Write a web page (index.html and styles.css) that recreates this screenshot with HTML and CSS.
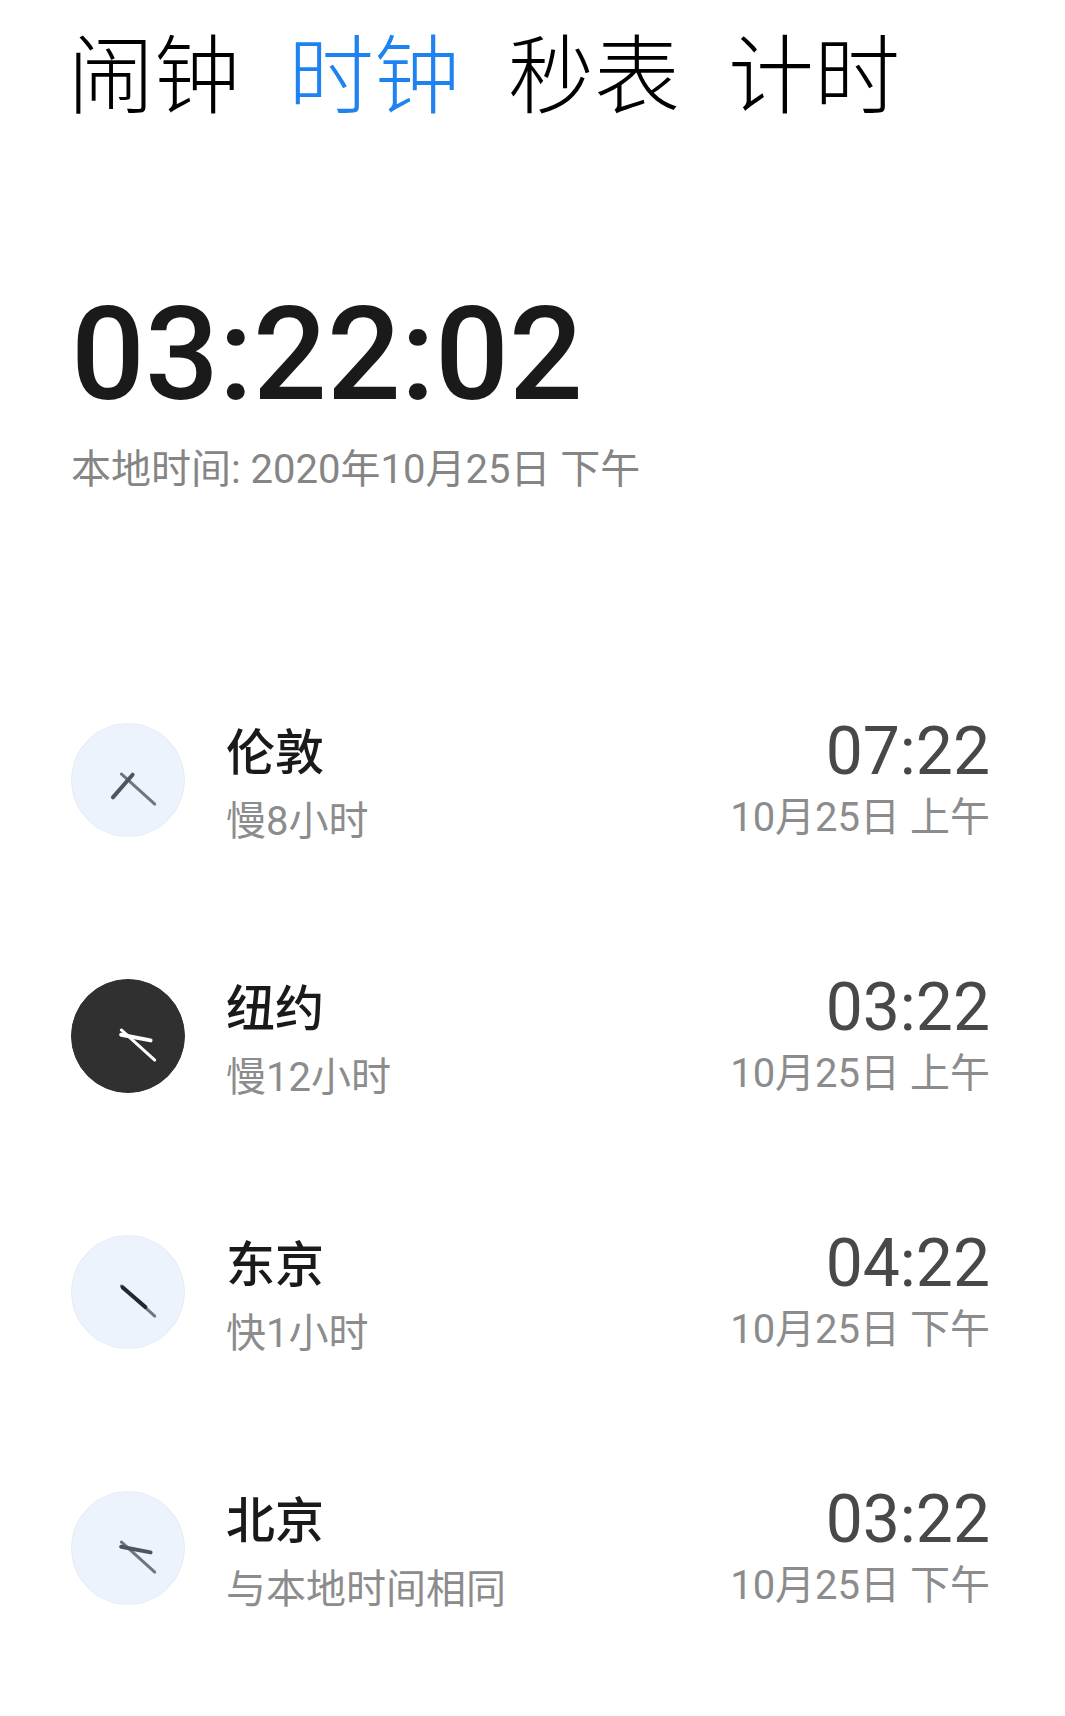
FILE: index.html
```html
<!DOCTYPE html>
<html lang="zh-CN">
<head>
<meta charset="utf-8">
<meta name="viewport" content="width=device-width, initial-scale=1">
<title>时钟</title>
<link rel="stylesheet" href="styles.css">
</head>
<body>
<nav class="tabs">
  <button class="tab" type="button">闹钟</button>
  <button class="tab tab-active" type="button" aria-current="page">时钟</button>
  <button class="tab" type="button">秒表</button>
  <button class="tab" type="button">计时</button>
</nav>
<main>
  <section class="local">
    <time class="local-time">03:22:02</time>
    <p class="local-date">本地时间: 2020年10月25日 下午</p>
  </section>
  <ul class="cities">
    <li class="city">
      <svg class="dial" viewBox="-57 -57 114 114" aria-hidden="true">
        <circle class="face" r="56.5"/>
        <path class="minute" d="M0 9V-36" transform="rotate(132)"/>
        <path class="hour" d="M0 7V-23" transform="rotate(221)"/>
      </svg>
      <div class="place">
        <h2 class="name">伦敦</h2>
        <p class="note">慢8小时</p>
      </div>
      <div class="when">
        <time class="clock">07:22</time>
        <p class="note">10月25日 上午</p>
      </div>
    </li>
    <li class="city">
      <svg class="dial dial-night" viewBox="-57 -57 114 114" aria-hidden="true">
        <circle class="face" r="56.5"/>
        <path class="minute" d="M0 9V-36" transform="rotate(132)"/>
        <path class="hour" d="M0 7V-23" transform="rotate(101)"/>
      </svg>
      <div class="place">
        <h2 class="name">纽约</h2>
        <p class="note">慢12小时</p>
      </div>
      <div class="when">
        <time class="clock">03:22</time>
        <p class="note">10月25日 上午</p>
      </div>
    </li>
    <li class="city">
      <svg class="dial" viewBox="-57 -57 114 114" aria-hidden="true">
        <circle class="face" r="56.5"/>
        <path class="minute" d="M0 9V-36" transform="rotate(132)"/>
        <path class="hour hour-solid" d="M0 7V-23" transform="rotate(131)"/>
      </svg>
      <div class="place">
        <h2 class="name">东京</h2>
        <p class="note">快1小时</p>
      </div>
      <div class="when">
        <time class="clock">04:22</time>
        <p class="note">10月25日 下午</p>
      </div>
    </li>
    <li class="city">
      <svg class="dial" viewBox="-57 -57 114 114" aria-hidden="true">
        <circle class="face" r="56.5"/>
        <path class="minute" d="M0 9V-36" transform="rotate(132)"/>
        <path class="hour" d="M0 7V-23" transform="rotate(101)"/>
      </svg>
      <div class="place">
        <h2 class="name">北京</h2>
        <p class="note">与本地时间相同</p>
      </div>
      <div class="when">
        <time class="clock">03:22</time>
        <p class="note">10月25日 下午</p>
      </div>
    </li>
  </ul>
</main>
</body>
</html>
```
FILE: styles.css
```css
* {
  box-sizing: border-box;
  margin: 0;
  padding: 0;
}

body {
  padding: 20px 75px 52px 68px;
  background: #fff;
  color: #1a1a1a;
  font-family: Roboto, "Noto Sans CJK SC", sans-serif;
}

main {
  padding-left: 3px;
}

.tabs {
  display: flex;
  gap: 48px;
}

.tab {
  border: 0;
  background: none;
  color: #000;
  font: 300 86px/100px "Noto Sans CJK SC", sans-serif;
  white-space: nowrap;
}

.tab-active {
  color: #1e82f0;
}

.local {
  padding-top: 160px;
}

.local-time {
  display: block;
  font-size: 130px;
  font-weight: 500;
  line-height: 150px;
}

.local-date {
  margin-top: 16px;
  color: #858585;
  font-size: 40px;
  font-weight: 400;
  line-height: 48px;
}

.cities {
  display: flex;
  flex-direction: column;
  gap: 124px;
  margin-top: 226px;
  list-style: none;
}

.city {
  display: flex;
  gap: 41px;
  min-height: 132px;
}

.dial {
  flex: none;
  width: 114px;
  height: 114px;
  margin-top: 3px;
  fill: none;
  stroke-linecap: round;
}

.face {
  fill: #edf3fc;
  stroke: #e6ebf3;
}

.hour {
  stroke: #50555d;
  stroke-width: 4;
}

.hour-solid {
  stroke: #24282e;
}

.minute {
  stroke: #70757d;
  stroke-width: 3;
}

.dial-night .face {
  fill: #303030;
  stroke: #303030;
}

.dial-night .hour,
.dial-night .minute {
  stroke: #fff;
}

.place {
  display: flex;
  flex: 1;
  flex-direction: column;
  gap: 6px;
}

.name {
  font-size: 49px;
  font-weight: 500;
  line-height: 68px;
}

.note {
  color: #8c8c8c;
  font-size: 40px;
  font-weight: 400;
  line-height: 56px;
}

.when {
  display: flex;
  flex-direction: column;
  gap: 6px;
  text-align: right;
}

.clock {
  color: #484848;
  font-size: 66px;
  font-weight: 400;
  line-height: 64px;
}
```
